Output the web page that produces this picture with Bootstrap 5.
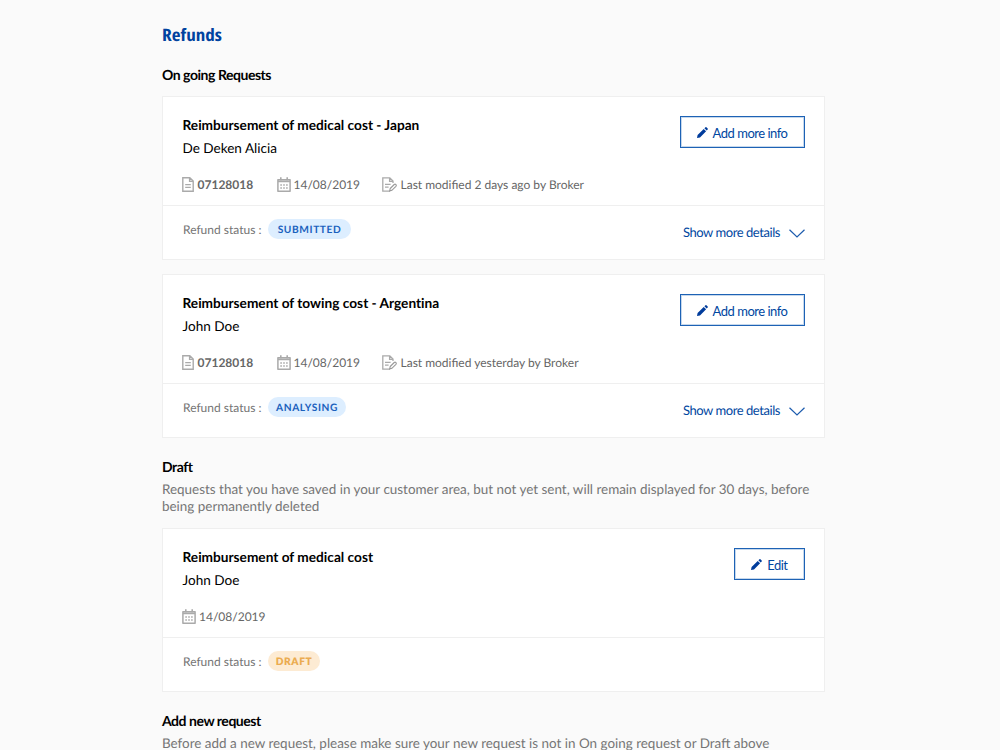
<!DOCTYPE html>
<html lang="en">
<head>
<meta charset="utf-8">
<meta name="viewport" content="width=device-width, initial-scale=1">
<title>Refunds</title>
<link href="https://cdn.jsdelivr.net/npm/bootstrap@5.3.0/dist/css/bootstrap.min.css" rel="stylesheet">
<style>
  body { background: #fafafa; color: #000; font-family: Lato, "Liberation Sans", sans-serif; font-size: 13.55px; overflow: hidden; height: 750px; text-rendering: geometricPrecision; }
  .page { width: 663px; margin-left: 162px; padding-top: 22px; }
  .page-title { font: 700 17px/26px "Open Sans", sans-serif; font-stretch: 75%; color: #00429f; height: 26px; margin-bottom: 17px; transform: scaleX(1.12); transform-origin: 0 50%; }
  .section-title { font-size: 14px; line-height: 19px; font-weight: 700; letter-spacing: -.46px; margin: 0 0 12px; }
  .section-title.with-intro { margin: 19px 0 5px; }
  .intro { font-size: 13.45px; line-height: 17px; color: #757575; margin-bottom: 13px; }
  .request { height: 164px; border: 1px solid #efefef; border-radius: 0; }
  .request + .request { margin-top: 14px; }
  .request-main { height: 109px; padding: 18px 19px 0 19.5px; border-bottom: 1px solid #efefef; }
  .request-name { font-size: 13.68px; line-height: 20px; font-weight: 700; margin-bottom: 3px; font-variant-ligatures: none; }
  .request-owner { line-height: 20px; }
  .meta { font-size: 12px; line-height: 18px; color: #666; margin-top: 18px; }
  .meta-item { white-space: nowrap; }
  .meta-item svg { margin: -2px 3px 0 -.5px; }
  .meta-id { width: 94.5px; }
  .meta-id svg { margin-right: 3.5px; }
  .meta-date { width: 105px; }
  .meta-edit svg { margin-right: 4px; }
  .request-status { padding: 13px 19px 0 20px; }
  .status-label { font-size: 12px; line-height: 21px; color: #757575; width: 85px; white-space: nowrap; }
  .pill { height: 20px; line-height: 22px; border-radius: 10px; padding: 0; font-size: 10.2px; font-weight: 700; letter-spacing: .6px; background: #ddeeff; color: #1a61bd; text-align: center; }
  .pill-submitted { width: 83px; }
  .pill-analysing { width: 78px; }
  .pill-draft { width: 52px; background: #fdebd3; color: #ebab50; font-weight: 800; }
  .btn-action { height: 32px; border: 1px solid #1d62b5; box-shadow: inset 0 0 0 1px rgba(29, 98, 181, .25); border-radius: 0; background: #fff; color: #00479f; padding: 1px 16.5px 0 16px; font-size: 13px; letter-spacing: -.49px; line-height: 28px; white-space: nowrap; margin-top: 1px; }
  .btn-action svg { margin: 0 5px 1px 0; }
  .details { color: #00479f; font-size: 13px; letter-spacing: -.44px; line-height: 20px; margin-top: 3px; }
  .details svg { margin: 2px 0 0 9px; }
</style>
</head>
<body>
<svg class="d-none" xmlns="http://www.w3.org/2000/svg">
  <symbol id="doc" viewBox="0 0 12 15"><path d="M.8.8h7L11.2 4v10.2H.8V.8zM7.6 1v3.4h3.5M3.2 7.6h5.6M3.2 10.4h5.6" fill="none" stroke="#aaa" stroke-width="1.4"/></symbol>
  <symbol id="cal" viewBox="0 0 14 15"><path d="M.9 2.7h12.2v11.5H.9zM1 4.4h12" fill="none" stroke="#aaa" stroke-width="1.5" stroke-linejoin="round"/><path d="M3.8.2v3M10.2.2v3" stroke="#aaa" stroke-width="1.6"/><path d="M3.3 8h7.6M3.3 10.9h7.6" stroke="#aaa" stroke-width="1.5" stroke-dasharray="1.6 1.3"/></symbol>
  <symbol id="docedit" viewBox="0 0 15 15"><path d="M11 6V4L7.8.8H.8v13.4H8M7.6 1v3.3H11M3 7.4h5.6M3 10.2h3.6" fill="none" stroke="#aaa" stroke-width="1.3"/><path d="M8.2 11.5l4-4q.9-.7 1.7.1t0 1.7l-4 4-2.2.6z" fill="none" stroke="#999" stroke-width="1.1"/></symbol>
  <symbol id="pencil" viewBox="0 0 11 11"><path d="M0 11l.6-3L6.7 1.9l2.4 2.4L3 10.4zM7.4 1.3L8.5.3q.5-.4.9 0l1.3 1.3q.3.4 0 .8l-1 1.2z" fill="#003c9c"/></symbol>
  <symbol id="chev" viewBox="0 0 16 9"><path d="M.5.7L8 8 15.5.7" fill="none" stroke="#1d5cae" stroke-width="1.2"/></symbol>
</svg>

<main class="page">
  <h1 class="page-title">Refunds</h1>

  <section>
    <h2 class="section-title">On going Requests</h2>

    <article class="card request">
      <div class="request-main d-flex justify-content-between align-items-start">
        <div>
          <h3 class="request-name">Reimbursement of medical cost - Japan</h3>
          <div class="request-owner">De Deken Alicia</div>
          <div class="meta d-flex">
            <span class="meta-item meta-id d-flex align-items-center"><svg width="12" height="15"><use href="#doc"/></svg><b>07128018</b></span>
            <span class="meta-item meta-date d-flex align-items-center"><svg width="14" height="15"><use href="#cal"/></svg>14/08/2019</span>
            <span class="meta-item meta-edit d-flex align-items-center"><svg width="15" height="15"><use href="#docedit"/></svg>Last modified 2 days ago by Broker</span>
          </div>
        </div>
        <button class="btn btn-action d-flex align-items-center"><svg width="11" height="11"><use href="#pencil"/></svg>Add more info</button>
      </div>
      <div class="request-status d-flex align-items-start">
        <span class="status-label">Refund status :</span><span class="badge pill pill-submitted">SUBMITTED</span>
        <a class="details ms-auto d-flex align-items-center text-decoration-none">Show more details<svg width="16" height="9"><use href="#chev"/></svg></a>
      </div>
    </article>

    <article class="card request">
      <div class="request-main d-flex justify-content-between align-items-start">
        <div>
          <h3 class="request-name">Reimbursement of towing cost - Argentina</h3>
          <div class="request-owner">John Doe</div>
          <div class="meta d-flex">
            <span class="meta-item meta-id d-flex align-items-center"><svg width="12" height="15"><use href="#doc"/></svg><b>07128018</b></span>
            <span class="meta-item meta-date d-flex align-items-center"><svg width="14" height="15"><use href="#cal"/></svg>14/08/2019</span>
            <span class="meta-item meta-edit d-flex align-items-center"><svg width="15" height="15"><use href="#docedit"/></svg>Last modified yesterday by Broker</span>
          </div>
        </div>
        <button class="btn btn-action d-flex align-items-center"><svg width="11" height="11"><use href="#pencil"/></svg>Add more info</button>
      </div>
      <div class="request-status d-flex align-items-start">
        <span class="status-label">Refund status :</span><span class="badge pill pill-analysing">ANALYSING</span>
        <a class="details ms-auto d-flex align-items-center text-decoration-none">Show more details<svg width="16" height="9"><use href="#chev"/></svg></a>
      </div>
    </article>
  </section>

  <section>
    <h2 class="section-title with-intro">Draft</h2>
    <p class="intro">Requests that you have saved in your customer area, but not yet sent, will remain displayed for 30 days, before being permanently deleted</p>

    <article class="card request">
      <div class="request-main d-flex justify-content-between align-items-start">
        <div>
          <h3 class="request-name">Reimbursement of medical cost</h3>
          <div class="request-owner">John Doe</div>
          <div class="meta d-flex">
            <span class="meta-item d-flex align-items-center"><svg width="14" height="15"><use href="#cal"/></svg>14/08/2019</span>
          </div>
        </div>
        <button class="btn btn-action d-flex align-items-center"><svg width="11" height="11"><use href="#pencil"/></svg>Edit</button>
      </div>
      <div class="request-status d-flex align-items-start">
        <span class="status-label">Refund status :</span><span class="badge pill pill-draft">DRAFT</span>
      </div>
    </article>
  </section>

  <section>
    <h2 class="section-title with-intro">Add new request</h2>
    <p class="intro mb-0">Before add a new request, please make sure your new request is not in On going request or Draft above</p>
  </section>
</main>
<script src="https://cdn.jsdelivr.net/npm/bootstrap@5.3.0/dist/js/bootstrap.bundle.min.js"></script>
</body>
</html>
